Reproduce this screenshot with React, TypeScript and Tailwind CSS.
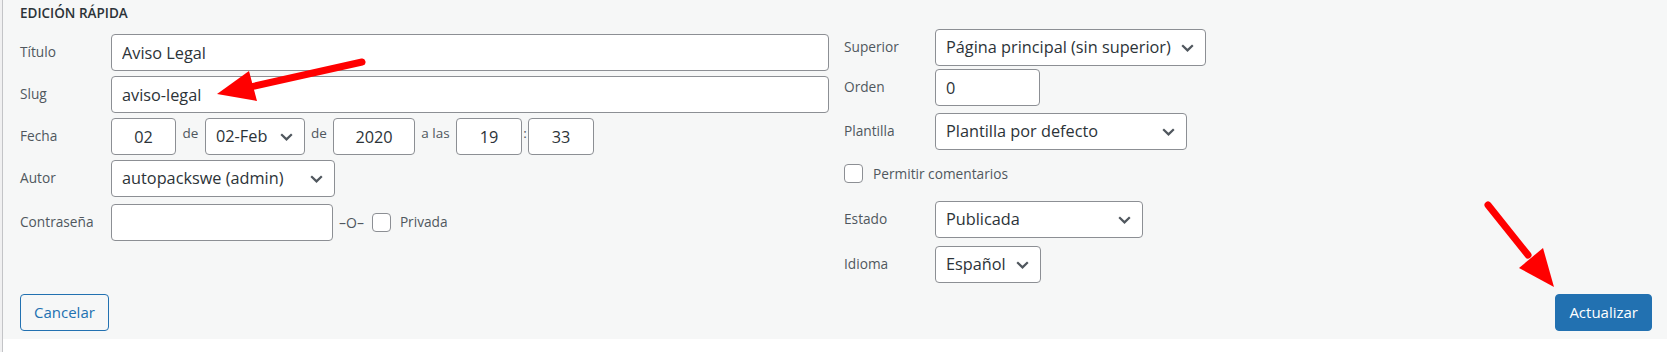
import React from "react";

function Chevron() {
  return (
    <svg width="13" height="8" viewBox="0 0 13 8" className="shrink-0">
      <path d="M1.2 1.2 L6.5 6.4 L11.8 1.2" fill="none" stroke="#50575e" strokeWidth="2.2" />
    </svg>
  );
}

function FakeSelect({ value, className }: { value: string; className: string }) {
  return (
    <div
      className={`flex h-[37px] shrink-0 items-center justify-between rounded-[4px] border border-[#8c8f94] bg-white pl-[10px] pr-[11px] text-[16.3px] text-[#2c3338] ${className}`}
    >
      <span className="whitespace-nowrap">{value}</span>
      <Chevron />
    </div>
  );
}

function Label({ children }: { children: React.ReactNode }) {
  return <span className="w-[91px] shrink-0 pb-[1px] text-[13.7px] text-[#50575e]">{children}</span>;
}

function Small({ children, className }: { children: React.ReactNode; className: string }) {
  return (
    <span className={`shrink-0 self-center pb-[6px] text-center text-[13.5px] text-[#50575e] ${className}`}>
      {children}
    </span>
  );
}

const inputCls =
  "h-[37px] shrink-0 rounded-[4px] border border-[#8c8f94] bg-white px-[10px] text-[16.3px] text-[#2c3338] outline-none";

export default function App() {
  return (
    <div className="relative flex h-[352px] w-[1667px] overflow-hidden bg-white font-['Open_Sans',sans-serif]">
      <div className="w-[2px] shrink-0 bg-[#f0f0f1]" />
      <div className="w-px shrink-0 bg-[#c3c4c7]" />
      <div className="flex flex-1 flex-col">
        <div className="bg-[#f6f7f7] pb-[8px] pl-[17px] pr-[15px] pt-[2px]">
          <div className="grid grid-cols-2">
            {/* Left column */}
            <div className="flex flex-col pr-[7px]">
              <div className="h-[20px] pt-[1px] text-[13.5px] font-semibold uppercase leading-[20px] text-[#2c3338]">
                Edición rápida
              </div>
              <div className="mt-[12px] flex items-center">
                <Label>Título</Label>
                <input className={`${inputCls} min-w-0 flex-1`} defaultValue="Aviso Legal" />
              </div>
              <div className="mt-[5px] flex items-center">
                <Label>Slug</Label>
                <input className={`${inputCls} min-w-0 flex-1`} defaultValue="aviso-legal" />
              </div>
              <div className="mt-[5px] flex items-center">
                <Label>Fecha</Label>
                <input className={`${inputCls} w-[65px] text-center`} defaultValue="02" />
                <Small className="w-[29px]">de</Small>
                <FakeSelect value="02-Feb" className="w-[100px]" />
                <Small className="w-[28px]">de</Small>
                <input className={`${inputCls} w-[82px] text-center`} defaultValue="2020" />
                <Small className="w-[41px]">a las</Small>
                <input className={`${inputCls} w-[66px] text-center`} defaultValue="19" />
                <Small className="w-[6px]">:</Small>
                <input className={`${inputCls} w-[66px] text-center`} defaultValue="33" />
              </div>
              <div className="mt-[5px] flex items-center">
                <Label>Autor</Label>
                <FakeSelect value="autopackswe (admin)" className="w-[224px]" />
              </div>
              <div className="mt-[7px] flex items-center">
                <Label>Contraseña</Label>
                <input className={`${inputCls} w-[222px]`} defaultValue="" />
                <span className="ml-[6px] text-[14px] text-[#50575e]">–O–</span>
                <span className="ml-[8px] h-[19px] w-[19px] shrink-0 rounded-[4px] border border-[#8c8f94] bg-white" />
                <span className="ml-[9px] text-[13.7px] text-[#50575e]">Privada</span>
              </div>
            </div>

            {/* Right column */}
            <div className="flex flex-col pl-[8px]">
              <div className="mt-[27px] flex items-center">
                <Label>Superior</Label>
                <FakeSelect value="Página principal (sin superior)" className="w-[271px]" />
              </div>
              <div className="mt-[3px] flex items-center">
                <Label>Orden</Label>
                <input className={`${inputCls} w-[105px]`} defaultValue="0" />
              </div>
              <div className="mt-[7px] flex items-center">
                <Label>Plantilla</Label>
                <FakeSelect value="Plantilla por defecto" className="w-[252px]" />
              </div>
              <div className="mt-[14px] flex h-[19px] items-center">
                <span className="h-[19px] w-[19px] shrink-0 rounded-[4px] border border-[#8c8f94] bg-white" />
                <span className="ml-[10px] pt-[1px] text-[13.7px] text-[#50575e]">Permitir comentarios</span>
              </div>
              <div className="mt-[18px] flex items-center">
                <Label>Estado</Label>
                <FakeSelect value="Publicada" className="w-[208px]" />
              </div>
              <div className="mt-[8px] flex items-center">
                <Label>Idioma</Label>
                <FakeSelect value="Español" className="w-[106px]" />
              </div>
            </div>
          </div>

          <div className="mt-[11px] flex items-center justify-between">
            <button className="h-[37px] rounded-[4px] border border-[#2271b1] bg-[#f6f7f7] px-[13px] text-[15px] text-[#2271b1]">
              Cancelar
            </button>
            <button className="h-[37px] rounded-[4px] border border-[#2271b1] bg-[#2271b1] px-[13px] text-[15px] text-white">
              Actualizar
            </button>
          </div>
        </div>
        <div className="flex-1 bg-white" />
      </div>

      <svg
        className="pointer-events-none absolute left-0 top-0"
        width="1667"
        height="352"
        viewBox="0 0 1667 352"
      >
        <line x1="362" y1="62" x2="246" y2="88" stroke="#ff0000" strokeWidth="7" strokeLinecap="round" />
        <polygon points="217,94 249,71 257,101" fill="#ff0000" />
        <line x1="1488" y1="205" x2="1528" y2="255" stroke="#ff0000" strokeWidth="7" strokeLinecap="round" />
        <polygon points="1554,287 1519,268 1543,248" fill="#ff0000" />
      </svg>
    </div>
  );
}
